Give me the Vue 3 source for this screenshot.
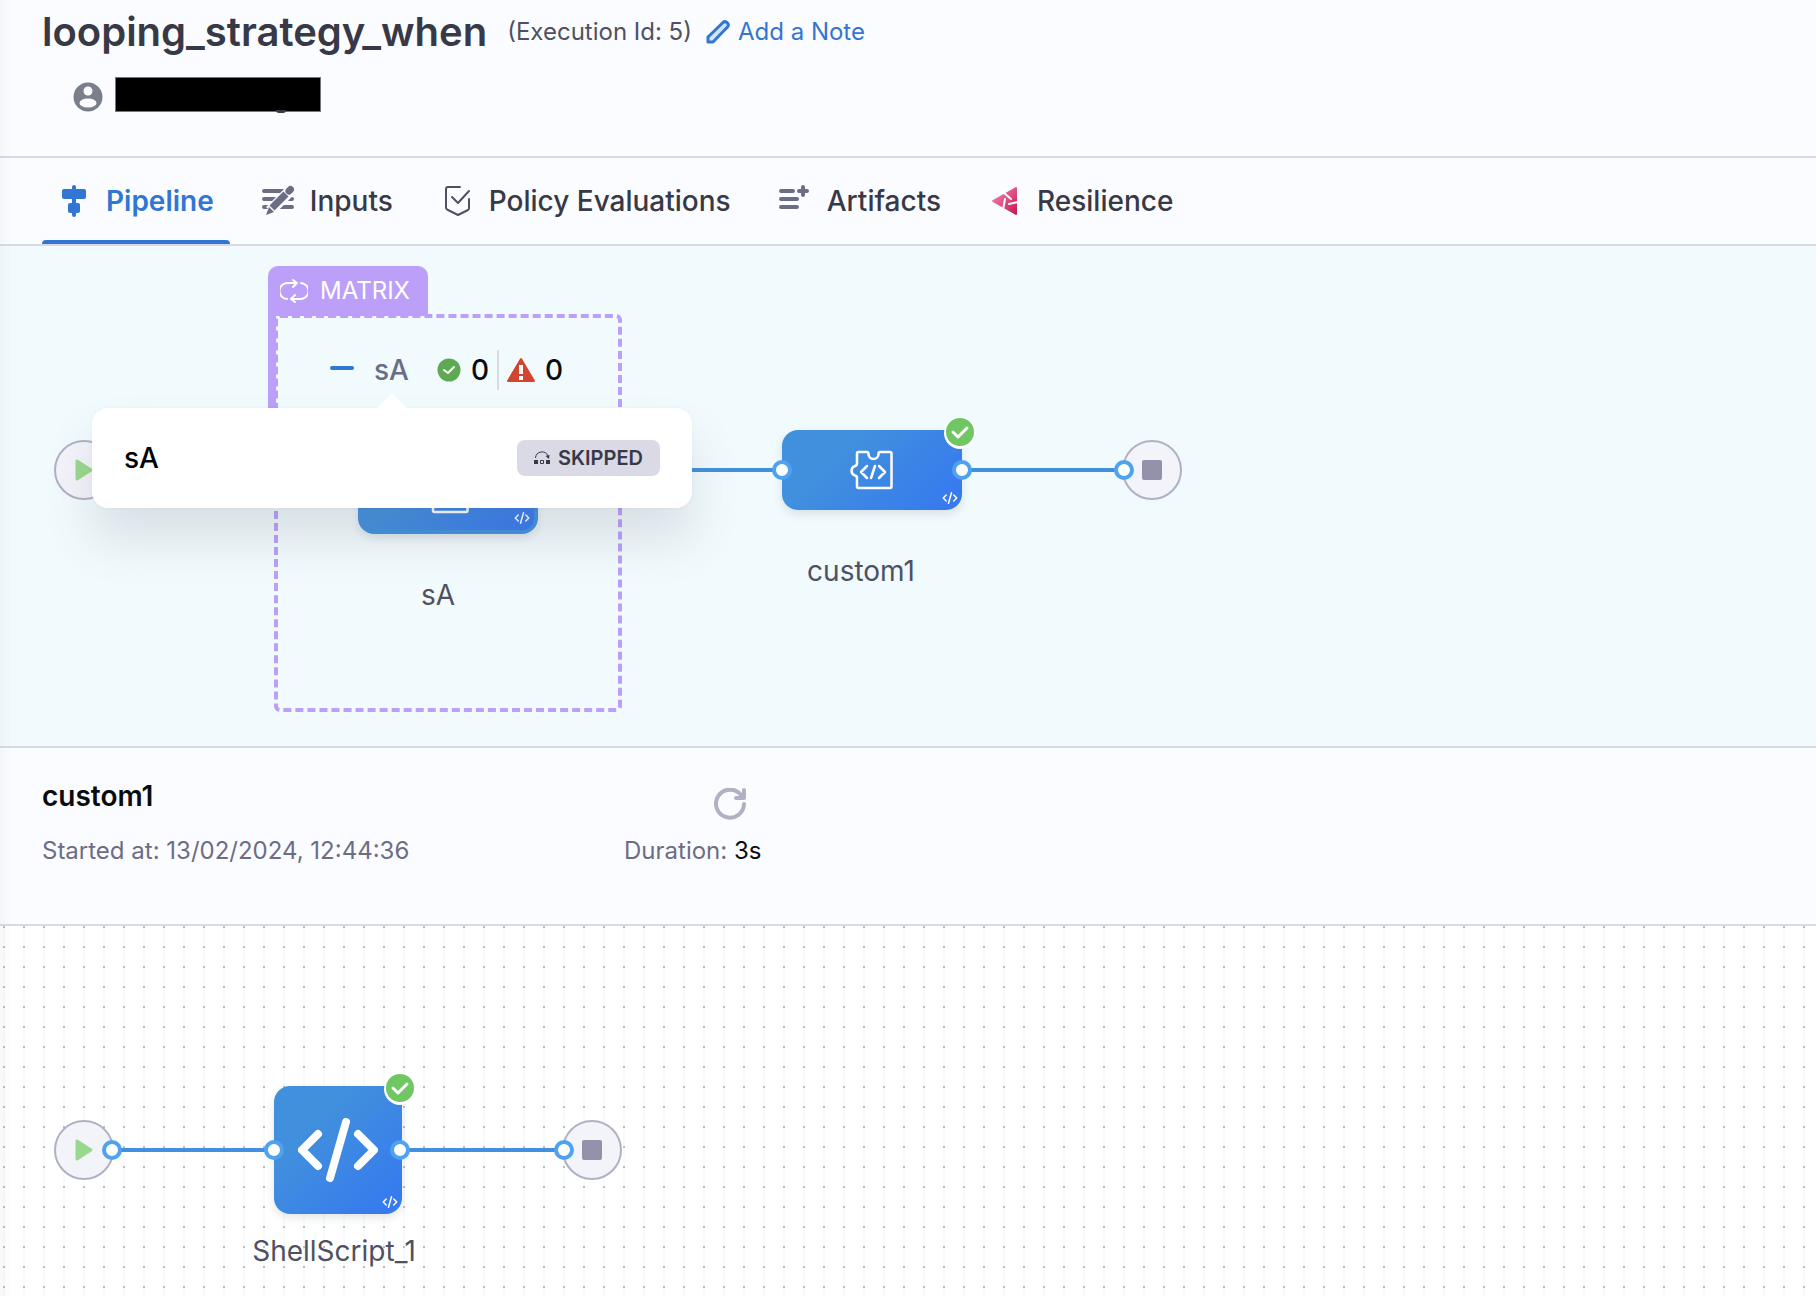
<script setup>
import { ref } from 'vue'

const tabs = [
  { id: 'pipeline', label: 'Pipeline' },
  { id: 'inputs', label: 'Inputs' },
  { id: 'policy', label: 'Policy Evaluations' },
  { id: 'artifacts', label: 'Artifacts' },
  { id: 'resilience', label: 'Resilience' },
]
const activeTab = ref('pipeline')

const at = (x, y) => ({ left: `${x}px`, top: `${y}px` })

const stageGraph = {
  start: [54, 194],
  end: [1122, 194],
  links: [[114, 222, 668], [962, 222, 162]],
  ports: [[772, 214], [952, 214], [1114, 214]],
}

const stepGraph = {
  start: [54, 194],
  end: [562, 194],
  links: [[112, 222, 162], [400, 222, 164]],
  ports: [[102, 214], [264, 214], [390, 214], [554, 214]],
}
</script>

<template>
  <div class="page">
    <svg class="defs" aria-hidden="true">
      <defs>
        <linearGradient id="pink" gradientUnits="userSpaceOnUse" x1="6" y1="8" x2="28" y2="28">
          <stop offset="0" stop-color="#f279ac" />
          <stop offset="1" stop-color="#c41b50" />
        </linearGradient>
        <symbol id="i-pipeline" viewBox="0 0 32 32">
          <path fill="#3176d3" d="M14 2a2 2 0 0 1 4 0v2h8a2 2 0 0 1 2 2v6a2 2 0 0 1-2 2h-8v4h2a2 2 0 0 1 2 2v6a2 2 0 0 1-2 2h-2v2a2 2 0 0 1-4 0v-2h-2a2 2 0 0 1-2-2v-6a2 2 0 0 1 2-2h2v-4H6a2 2 0 0 1-2-2V6a2 2 0 0 1 2-2h8z" />
        </symbol>
        <symbol id="i-inputs" viewBox="0 0 32 32">
          <path fill="none" stroke="#6b6d85" stroke-width="4" stroke-linecap="round" d="M2 6h19M2 14h11M22 14h8M2 22h4M16 22h14" />
          <path fill="none" stroke="#fbfcff" stroke-width="11" d="M8 26 29 5" />
          <path fill="none" stroke="#6b6d85" stroke-width="7" d="M10 23 24 9" />
          <path fill="none" stroke="#6b6d85" stroke-width="7" stroke-linecap="round" d="m27 6 1.500-1.500" />
          <path fill="#6b6d85" d="m7 22 5 5-8 3z" />
        </symbol>
        <symbol id="i-policy" viewBox="0 0 32 32">
          <g fill="none" stroke="#4f5162" stroke-width="2" stroke-linecap="round" stroke-linejoin="round">
            <path d="M19 2H7a2 2 0 0 0-2 2v19a3 3 0 0 0 2 2l10 5 10-5a2 2 0 0 0 1-2V14" />
            <path d="m11 12 6 6L28 6" />
          </g>
        </symbol>
        <symbol id="i-artifacts" viewBox="0 0 32 32">
          <g fill="none" stroke="#6b6d85" stroke-width="4" stroke-linecap="round">
            <path d="M2 6h12M2 14h16M2 22h16" />
            <path d="M24 2v8M20 6h8" />
          </g>
        </symbol>
        <symbol id="i-resilience" viewBox="0 0 32 32">
          <path fill="url(#pink)" stroke="url(#pink)" stroke-width="2" stroke-linejoin="round" d="m4 16 23-13v26z" />
          <path fill="none" stroke="#fbfcff" stroke-width="2" stroke-linecap="round" d="m14 7 8 7M29 17l-9 2M16 14l-2 11" />
        </symbol>
        <symbol id="i-code" viewBox="0 0 80 64">
          <path fill="none" stroke="#fff" stroke-width="8" stroke-linecap="round" stroke-linejoin="round" d="M20 16 4 32l16 16M60 16l16 16-16 16M48 4 32 60" />
        </symbol>
        <symbol id="i-custom" viewBox="0 0 44 40">
          <g fill="none" stroke="#fff" stroke-width="2.500" stroke-linecap="round" stroke-linejoin="round">
            <path d="M8 3.500Q8 2 9.500 2H18q1.500 0 1.500 2a5 5 0 0 0 10 0q0-2 1.500-2h10q1.500 0 1.500 1.500v33q0 1.500-1.500 1.500h-31.500Q8 38 8 36.500V28q0-2-2-2.500a5 5 0 0 1 0-9.500q2-.5 2-2.500z" />
            <path d="m18 16-6 6 6 6M30 16l6 6-6 6M26 16l-4 12" />
          </g>
        </symbol>
        <symbol id="i-success" viewBox="0 0 32 32">
          <circle cx="16" cy="16" r="16" fill="#fff" />
          <circle cx="16" cy="15" r="14" fill="#70c662" />
          <path fill="none" stroke="#fff" stroke-width="3" stroke-linecap="round" stroke-linejoin="round" d="m9 15 5 5 9-9" />
        </symbol>
      </defs>
    </svg>

    <header class="head">
      <div class="title-row">
        <h1>looping_strategy_when</h1>
        <span class="exec">(Execution Id: 5)</span>
        <button class="note" type="button">
          <svg width="24" height="24" viewBox="0 0 24 24" aria-hidden="true">
            <path fill="#d3e4f8" stroke="#3176d3" stroke-width="3" stroke-linejoin="round" d="M2 22v-5L17 2.500a3.200 3.200 0 0 1 4.500 4.500L7 22z" />
          </svg>
          Add a Note
        </button>
      </div>
      <div class="user-row">
        <svg width="30" height="30" viewBox="0 0 30 30" aria-hidden="true">
          <circle cx="15" cy="15" r="14.500" fill="#7a808a" />
          <circle cx="15" cy="9" r="4.500" fill="#fbfcff" />
          <ellipse cx="15" cy="21" rx="8.500" ry="4.500" fill="#fbfcff" />
        </svg>
        <span class="redacted"></span>
      </div>
    </header>

    <nav class="tabs">
      <button
        v-for="tab in tabs"
        :key="tab.id"
        type="button"
        class="tab"
        :class="{ active: tab.id === activeTab }"
        @click="activeTab = tab.id"
      >
        <svg width="32" height="32" aria-hidden="true"><use :href="`#i-${tab.id}`" /></svg>
        {{ tab.label }}
      </button>
    </nav>

    <section class="canvas stage-canvas">
      <div v-for="(l, i) in stageGraph.links" :key="`l${i}`" class="link" :style="{ ...at(l[0], l[1]), width: `${l[2]}px` }"></div>
      <div class="terminal" :style="at(...stageGraph.start)">
        <svg width="18" height="22" viewBox="0 0 18 22" class="play"><path d="M2 2v18l14-9z" /></svg>
      </div>
      <div class="terminal" :style="at(...stageGraph.end)"><span class="stop"></span></div>

      <div class="matrix-strip"></div>
      <div class="matrix-tag">
        <svg width="28" height="24" viewBox="0 0 28 24" fill="none" stroke="#fff" stroke-width="2" stroke-linecap="round" stroke-linejoin="round" aria-hidden="true">
          <path d="M7 20a8 8 0 0 1 1-16h9M13 1l4 3-4 4M21 4a8 8 0 0 1-1 16h-9M15 16l-4 4 4 3" />
        </svg>
        MATRIX
      </div>
      <div class="matrix-box">
        <div class="matrix-head">
          <span class="minus"></span>
          <span class="matrix-name">sA</span>
          <svg width="24" height="24" viewBox="0 0 24 24" aria-hidden="true">
            <circle cx="12" cy="12" r="11.500" fill="#5fa954" />
            <path fill="none" stroke="#fff" stroke-width="2" stroke-linecap="round" stroke-linejoin="round" d="m7 12 4 3 6-6" />
          </svg>
          <span class="count">0</span>
          <span class="divider"></span>
          <svg width="28" height="26" viewBox="0 0 28 26" aria-hidden="true">
            <path fill="#d34431" stroke="#d34431" stroke-width="2" stroke-linejoin="round" d="m14 2 13 22H1z" />
            <path fill="#fff" d="M12 8h4v9h-4zM12 19h4v4h-4z" />
          </svg>
          <span class="count">0</span>
        </div>
      </div>

      <div class="node stage bordered" :style="at(358, 208)">
        <svg class="glyph" width="44" height="40"><use href="#i-custom" /></svg>
        <svg class="mini" width="16" height="12"><use href="#i-code" /></svg>
      </div>
      <div class="label" :style="at(338, 329)">sA</div>

      <div class="node stage" :style="at(782, 184)">
        <svg class="glyph" width="44" height="40"><use href="#i-custom" /></svg>
        <svg class="mini" width="16" height="12"><use href="#i-code" /></svg>
        <svg class="badge" width="32" height="32"><use href="#i-success" /></svg>
      </div>
      <div class="label" :style="at(761, 305)">custom1</div>
      <span v-for="(p, i) in stageGraph.ports" :key="`p${i}`" class="port" :style="at(...p)"></span>

      <div class="popover" role="tooltip">
        <span class="pop-name">sA</span>
        <span class="status">
          <svg width="16" height="14" viewBox="0 0 16 14" aria-hidden="true">
            <path fill="#383946" d="M0 9h4v4H0zM12 9h4v4h-4z" />
            <path fill="none" stroke="#383946" d="M6.500 9.500h3v3h-3zM1.500 7A6.500 6.500 0 0 1 14 5" />
            <path fill="#383946" d="m11.500 5 4-1-.5 4z" />
          </svg>
          SKIPPED
        </span>
      </div>
    </section>

    <section class="details">
      <div class="col">
        <h2>custom1</h2>
        <p>Started at: 13/02/2024, 12:44:36</p>
      </div>
      <div class="col duration">
        <button type="button" class="retry" aria-label="Retry">
          <svg width="32" height="32" viewBox="0 0 32 32" fill="none" stroke="#b0b1c4" stroke-width="4" stroke-linecap="round" stroke-linejoin="round">
            <path d="M30 16a14 14 0 1 1-3-9l2 3M30 2v8h-8" />
          </svg>
        </button>
        <p>Duration: <b>3s</b></p>
      </div>
    </section>

    <section class="canvas step-canvas">
      <div v-for="(l, i) in stepGraph.links" :key="`l${i}`" class="link" :style="{ ...at(l[0], l[1]), width: `${l[2]}px` }"></div>
      <div class="terminal" :style="at(...stepGraph.start)">
        <svg width="18" height="22" viewBox="0 0 18 22" class="play"><path d="M2 2v18l14-9z" /></svg>
      </div>
      <div class="terminal" :style="at(...stepGraph.end)"><span class="stop"></span></div>
      <div class="node step" :style="at(274, 160)">
        <svg class="glyph" width="80" height="64"><use href="#i-code" /></svg>
        <svg class="mini" width="16" height="12"><use href="#i-code" /></svg>
        <svg class="badge" width="32" height="32"><use href="#i-success" /></svg>
      </div>
      <div class="label" :style="at(234, 305)">ShellScript_1</div>
      <span v-for="(p, i) in stepGraph.ports" :key="`p${i}`" class="port" :style="at(...p)"></span>
    </section>
  </div>
</template>

<style>
body {
  margin: 0;
  background: #fff;
}
</style>

<style scoped>
* {
  box-sizing: border-box;
}
.page {
  position: relative;
  display: flex;
  flex-direction: column;
  min-height: 100vh;
  overflow: hidden;
  background: #fbfcff;
  font-family: Inter, "Liberation Sans", sans-serif;
  font-size: 24px;
  line-height: 32px;
  color: #383946;
}
.page::after {
  content: "";
  position: absolute;
  inset: 0 auto 0 0;
  width: 12px;
  background: linear-gradient(90deg, rgba(40, 41, 61, 0.03), transparent);
  pointer-events: none;
}
.defs {
  position: absolute;
  width: 0;
  height: 0;
}
button {
  padding: 0;
  border: 0;
  background: none;
  font: inherit;
  color: inherit;
  cursor: pointer;
}
svg {
  flex: none;
}
h1,
h2,
p {
  margin: 0;
}
.head {
  padding: 8px 42px 44px;
  border-bottom: 2px solid #d9dae5;
}
.title-row {
  display: flex;
  align-items: center;
  height: 48px;
}
h1 {
  font-size: 40px;
  line-height: 48px;
  font-weight: 600;
}
.exec {
  margin-left: 20px;
  color: #4f5162;
}
.note {
  display: flex;
  align-items: center;
  gap: 8px;
  margin-left: 14px;
  color: #3176d3;
}
.user-row {
  display: flex;
  align-items: center;
  gap: 12px;
  height: 36px;
  margin: 20px 0 0 31px;
}
.user-row svg {
  margin-top: 6px;
}
.redacted {
  position: relative;
  width: 206px;
  height: 35px;
  background: #000;
  border: 1px solid #777;
}
.redacted::after {
  content: "";
  position: absolute;
  left: 160px;
  bottom: -2px;
  width: 10px;
  height: 3px;
  border-radius: 0 0 5px 5px;
  background: #383946;
}
.tabs {
  display: flex;
  gap: 16px;
  padding: 0 42px;
  height: 88px;
  border-bottom: 2px solid #d9dae5;
}
.tab {
  position: relative;
  display: flex;
  align-items: center;
  gap: 16px;
  padding: 0 16px;
  font-size: 28px;
  font-weight: 500;
  white-space: nowrap;
}
.tab.active {
  color: #3176d3;
  font-weight: 600;
}
.tab.active::after {
  content: "";
  position: absolute;
  inset: auto 0 0 0;
  height: 4px;
  border-radius: 4px 4px 0 0;
  background: #3176d3;
}
.canvas {
  position: relative;
}
.stage-canvas {
  height: 502px;
  background: #f1fafd;
  border-bottom: 2px solid #d9dae5;
}
.step-canvas {
  flex: 1;
  min-height: 370px;
  background:
    conic-gradient(from 270deg at 2px 2px, #b8bdc2 90deg, transparent 0) 3px 0 / 20px 20px,
    linear-gradient(90deg, #f6fbfe 2px, transparent 2px) 3px 0 / 20px 20px,
    #fff;
}
.link {
  position: absolute;
  height: 4px;
  background: #4190dd;
}
.terminal {
  position: absolute;
  display: flex;
  align-items: center;
  justify-content: center;
  width: 60px;
  height: 60px;
  border: 2px solid #b0b1c4;
  border-radius: 50%;
  background: #f3f3fa;
}
.play path {
  fill: #9ad88c;
  stroke: #9ad88c;
  stroke-width: 3;
  stroke-linejoin: round;
}
.stop {
  width: 20px;
  height: 20px;
  border-radius: 2px;
  background: #9293ab;
}
.port {
  position: absolute;
  width: 20px;
  height: 20px;
  border: 4px solid #4fa2f0;
  border-radius: 50%;
  background: #fff;
}
.node {
  position: absolute;
  display: flex;
  align-items: center;
  justify-content: center;
  border-radius: 16px;
  background: linear-gradient(135deg, #4190dd 30%, #3679f0 95%);
  box-shadow: 0 4px 8px rgba(96, 97, 112, 0.16);
}
.stage {
  width: 180px;
  height: 80px;
}
.stage .glyph {
  margin-right: 2px;
}
.bordered {
  border: 4px solid #4190dd;
}
.step {
  width: 128px;
  height: 128px;
}
.mini {
  position: absolute;
  right: 4px;
  bottom: 6px;
}
.badge {
  position: absolute;
  top: -13px;
  right: -14px;
}
.label {
  position: absolute;
  width: 200px;
  font-size: 28px;
  line-height: 40px;
  text-align: center;
  color: #4f5162;
}
.matrix-strip {
  position: absolute;
  left: 268px;
  top: 60px;
  width: 8px;
  height: 120px;
  background: #bb9ff8;
}
.matrix-tag {
  position: absolute;
  left: 268px;
  top: 20px;
  display: flex;
  align-items: center;
  gap: 12px;
  width: 160px;
  height: 50px;
  padding-left: 12px;
  border-radius: 10px 10px 0 0;
  background: #bb9ff8;
  color: #fff;
}
.matrix-box {
  position: absolute;
  left: 274px;
  top: 68px;
  width: 348px;
  height: 398px;
  border: 4px dashed #bb9ff8;
  border-radius: 6px;
}
.matrix-head {
  display: flex;
  align-items: center;
  height: 40px;
  margin: 32px 0 0 52px;
  font-size: 28px;
  font-weight: 500;
}
.minus {
  width: 24px;
  height: 4px;
  margin-bottom: 4px;
  border-radius: 2px;
  background: #3176d3;
}
.matrix-name {
  margin: 0 28px 0 20px;
  color: #6b6d85;
}
.count {
  margin-left: 10px;
  color: #0b0b0d;
}
.divider {
  width: 2px;
  height: 40px;
  margin: 0 8px;
  background: #d9dae5;
}
.popover {
  position: absolute;
  left: 92px;
  top: 162px;
  display: flex;
  align-items: center;
  justify-content: space-between;
  width: 600px;
  height: 100px;
  padding: 0 32px;
  border-radius: 16px;
  background: #fff;
  box-shadow: 0 0 4px rgba(40, 41, 61, 0.04), 0 32px 48px rgba(96, 97, 112, 0.16);
}
.popover::before {
  content: "";
  position: absolute;
  left: 284px;
  top: -15px;
  width: 32px;
  height: 16px;
  background: #fff;
  clip-path: polygon(50% 0, 100% 100%, 0 100%);
}
.pop-name {
  font-size: 28px;
  font-weight: 500;
  color: #000;
}
.status {
  display: flex;
  align-items: center;
  justify-content: center;
  gap: 8px;
  min-width: 143px;
  height: 36px;
  border-radius: 8px;
  background: #d9dae5;
  font-size: 20px;
  font-weight: 600;
}
.details {
  display: flex;
  min-height: 178px;
  padding: 30px 42px;
  border-bottom: 2px solid #d9dae5;
  color: #6b6d85;
}
.col {
  width: 582px;
}
h2 {
  height: 40px;
  margin-bottom: 17px;
  font-size: 28px;
  line-height: 36px;
  font-weight: 600;
  color: #0b0b0d;
}
.retry {
  display: block;
  height: 32px;
  margin: 10px 0 15px 90px;
}
.retry svg {
  display: block;
}
.duration b {
  font-weight: 400;
  color: #0b0b0d;
}
</style>
